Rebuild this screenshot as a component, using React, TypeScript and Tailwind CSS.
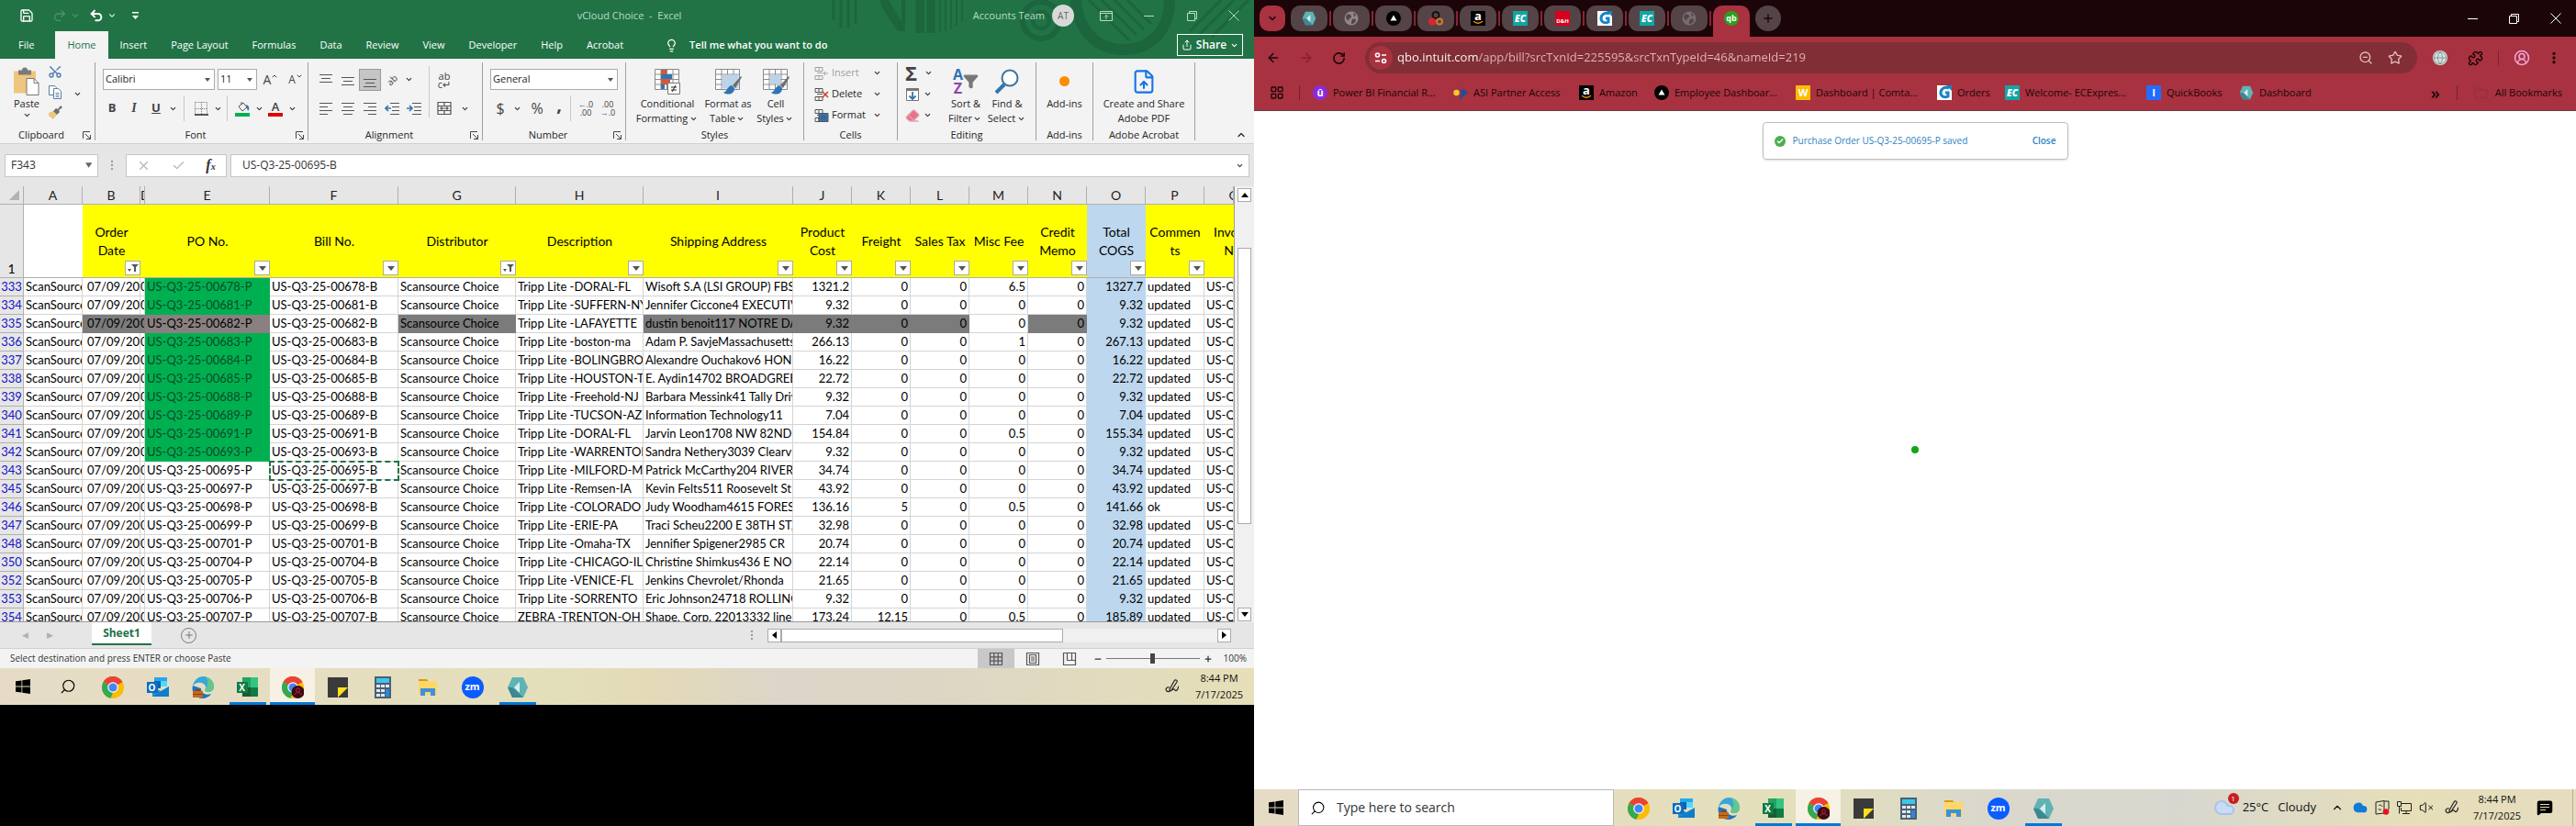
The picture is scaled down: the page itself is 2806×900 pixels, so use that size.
import React from 'react';
import {
    ArrowLeft, ArrowRight, ChevronDown, ChevronUp, Copy, Ellipsis, EllipsisVertical, FileUp, Globe, LayoutGrid, Lightbulb,
    Minus, Plus, Puzzle, Redo2, RotateCw, Save, Scissors, Search, Share, Star, Undo2, X, ZoomOut,
    CircleUserRound, Folder, VolumeX, MessageSquareText, Check, Cloud, Filter, Eraser,
} from 'lucide-react';

const menuTabs = ['File', 'Home', 'Insert', 'Page Layout', 'Formulas', 'Data', 'Review', 'View', 'Developer', 'Help', 'Acrobat'];

const columns = [
    { letter: 'A', width: 64, title: '' },
    { letter: 'B', width: 63, title: 'Order Date', filtered: true, narrow: true },
    { letter: 'D', width: 5, title: '' },
    { letter: 'E', width: 136, title: 'PO No.' },
    { letter: 'F', width: 140, title: 'Bill No.' },
    { letter: 'G', width: 128, title: 'Distributor', filtered: true },
    { letter: 'H', width: 139, title: 'Description' },
    { letter: 'I', width: 163, title: 'Shipping Address' },
    { letter: 'J', width: 64, title: 'Product Cost', narrow: true },
    { letter: 'K', width: 64, title: 'Freight' },
    { letter: 'L', width: 64, title: 'Sales Tax' },
    { letter: 'M', width: 64, title: 'Misc Fee' },
    { letter: 'N', width: 64, title: 'Credit Memo', narrow: true },
    { letter: 'O', width: 64, title: 'Total COGS', narrow: true },
    { letter: 'P', width: 64, title: 'Commen ts', narrow: true },
    { letter: 'Q', width: 33, title: 'Invoice No.' },
];

// row, po, description, address, cost, freight, misc, total, comment
const rows: [number, string, string, string, string, string, string, string, string][] = [
    [333, '00678', 'Tripp Lite -DORAL-FL', 'Wisoft S.A (LSI GROUP) FBS', '1321.2', '0', '6.5', '1327.7', 'updated'],
    [334, '00681', 'Tripp Lite -SUFFERN-NY', 'Jennifer Ciccone4 EXECUTIVE', '9.32', '0', '0', '9.32', 'updated'],
    [335, '00682', 'Tripp Lite -LAFAYETTE', 'dustin benoit117 NOTRE DAME', '9.32', '0', '0', '9.32', 'updated'],
    [336, '00683', 'Tripp Lite -boston-ma', 'Adam P. SavjeMassachusetts', '266.13', '0', '1', '267.13', 'updated'],
    [337, '00684', 'Tripp Lite -BOLINGBROOK', 'Alexandre Ouchakov6 HONEY', '16.22', '0', '0', '16.22', 'updated'],
    [338, '00685', 'Tripp Lite -HOUSTON-TX', 'E. Aydin14702 BROADGREEN', '22.72', '0', '0', '22.72', 'updated'],
    [339, '00688', 'Tripp Lite -Freehold-NJ', 'Barbara Messink41 Tally Drive', '9.32', '0', '0', '9.32', 'updated'],
    [340, '00689', 'Tripp Lite -TUCSON-AZ', 'Information Technology11', '7.04', '0', '0', '7.04', 'updated'],
    [341, '00691', 'Tripp Lite -DORAL-FL', 'Jarvin Leon1708 NW 82ND', '154.84', '0', '0.5', '155.34', 'updated'],
    [342, '00693', 'Tripp Lite -WARRENTON', 'Sandra Nethery3039 Clearview', '9.32', '0', '0', '9.32', 'updated'],
    [343, '00695', 'Tripp Lite -MILFORD-MA', 'Patrick McCarthy204 RIVER', '34.74', '0', '0', '34.74', 'updated'],
    [345, '00697', 'Tripp Lite -Remsen-IA', 'Kevin Felts511 Roosevelt St', '43.92', '0', '0', '43.92', 'updated'],
    [346, '00698', 'Tripp Lite -COLORADO', 'Judy Woodham4615 FOREST', '136.16', '5', '0.5', '141.66', 'ok'],
    [347, '00699', 'Tripp Lite -ERIE-PA', 'Traci Scheu2200 E 38TH ST,', '32.98', '0', '0', '32.98', 'updated'],
    [348, '00701', 'Tripp Lite -Omaha-TX', 'Jennifier Spigener2985 CR', '20.74', '0', '0', '20.74', 'updated'],
    [350, '00704', 'Tripp Lite -CHICAGO-IL', 'Christine Shimkus436 E NORTH', '22.14', '0', '0', '22.14', 'updated'],
    [352, '00705', 'Tripp Lite -VENICE-FL', 'Jenkins Chevrolet/Rhonda', '21.65', '0', '0', '21.65', 'updated'],
    [353, '00706', 'Tripp Lite -SORRENTO', 'Eric Johnson24718 ROLLING', '9.32', '0', '0', '9.32', 'updated'],
    [354, '00707', 'ZEBRA -TRENTON-OH', 'Shape, Corp. 22013332 line', '173.24', '12.15', '0.5', '185.89', 'updated'],
];

const Chev = ({ className = 'w-3' }: { className?: string }) => (
    <span className={`flex shrink-0 items-center justify-center ${className}`}>
        <ChevronDown className="size-[9px] text-[#333]" strokeWidth={3} />
    </span>
);

const Restore = ({ className = 'size-[11px]' }: { className?: string }) => (
    <svg viewBox="0 0 11 11" className={className} fill="none" stroke="currentColor"><path d="M.5 2.500h8v8h-8zM2.500 2.500v-2h8v8h-2" /></svg>
);

const IconButton = ({ label, className = 'w-6', children }: { label: string, className?: string, children: React.ReactNode }) => (
    <button aria-label={label} className={`flex h-6 shrink-0 items-center justify-center text-[#444] ${className}`}>{children}</button>
);

const Combo = ({ label, value, className }: { label: string, value: string, className: string }) => (
    <label className={`flex h-[23px] shrink-0 items-center border border-[#ababab] bg-white pr-1 pl-0.5 ${className}`}>
        <select aria-label={label} className="min-w-0 flex-1 appearance-none outline-none"><option>{value}</option></select>
        <svg viewBox="0 0 6 4" className="h-1 w-1.5" fill="#555"><path d="M0 0h6L3 4z" /></svg>
    </label>
);

const Sep = ({ className = '' }: { className?: string }) => <span className={`h-7 w-px shrink-0 bg-[#c8c8c8] ${className}`} />;

const Group = ({ label, width, launcher, children }: { label: string, width: string, launcher?: boolean, children: React.ReactNode }) => (
    <section aria-label={label} className={`flex shrink-0 flex-col border-r border-[#a0a0a0] ${width}`}>
        <div className="flex h-[73px] flex-col">{children}</div>
        <div className="flex h-3 items-center leading-3">
            <span className="flex-1 text-center">{label}</span>
            {launcher && (
                <button aria-label={`${label} settings`} className="mr-1">
                    <svg viewBox="0 0 9 9" className="size-[9px]" fill="none" stroke="#444"><path d="M8 .5H.5V8M3 3l5 5M8.500 4v4.500H4" /></svg>
                </button>
            )}
        </div>
    </section>
);

// big ribbon button: picture on top, two lines of text below it
const BigButton = ({ lines, width, arrow, children }: { lines: string[], width: string, arrow?: boolean, children: React.ReactNode }) => (
    <button className={`flex shrink-0 flex-col items-center leading-4 ${width}`}>
        <span className="flex h-[37px] items-center pt-1">{children}</span>
        {lines.map((line, i) => (
            <span key={line} className="flex items-center whitespace-nowrap">
                {line}{arrow && i === lines.length - 1 && <Chev />}
            </span>
        ))}
    </button>
);

const Lines = ({ d }: { d: string }) => (
    <svg viewBox="0 0 16 16" className="size-4" fill="none" stroke="#555" strokeWidth="1.200"><path d={d} /></svg>
);

const GridPic = ({ blocks, brush }: { blocks: React.ReactNode, brush?: boolean }) => (
    <svg viewBox="0 0 30 30" className="size-[30px]" fill="none">
        <path fill="#fff" stroke="#8a8a8a" d="M1.500 1.500h26v22h-26z" />
        <path stroke="#8a8a8a" d="M1.500 7h26M1.500 12.500h26M1.500 18h26M8 1.500v22M14.500 1.500v22M21 1.500v22" />
        {blocks}
        {brush && <path fill="#6d6d6d" d="M29 9l-9 10 3 3 7-12z" />}
        {brush && <path fill="#2f75b5" d="M19 19c-4 0-4 6-9 8 5 3 12 2 12-5z" />}
    </svg>
);

const ChromeIcon = ({ badge }: { badge?: boolean }) => (
    <svg viewBox="0 0 24 24" className="size-6">
        <circle cx="12" cy="12" r="12" fill="#fbbc05" />
        <path fill="#ea4335" d="M12 12L1.600 6a12 12 0 0 1 20.800 0z" />
        <path fill="#ea4335" d="M1.600 6a12 12 0 0 1 20.800 0.500H12z" />
        <path fill="#34a853" d="M1.600 6L12 12l-1 6-2.500 5.500A12 12 0 0 1 1.600 6z" />
        <path fill="#34a853" d="M7 15l5 3-2.500 5.700A12 12 0 0 1 4 21z" />
        <circle cx="12" cy="12" r="5.800" fill="#fff" /><circle cx="12" cy="12" r="4.600" fill="#4285f4" />
        {badge && <g><circle cx="17.500" cy="17" r="7" fill="#3b0a12" /><circle cx="17.500" cy="15" r="2" fill="none" stroke="#b5213d" /><path d="M13.500 20c1-3 7-3 8 0" fill="none" stroke="#b5213d" /></g>}
    </svg>
);

const OutlookIcon = () => (
    <span className="relative block size-6">
        <svg viewBox="0 0 24 24" className="size-6"><path fill="#28a8ea" d="M8 1h14v10H8z" /><path fill="#0364b8" d="M8 5h7v8H8z" /><path fill="#50d9ff" d="M15 5h7v6h-7z" /><path fill="#1490df" d="M6 11l9 5 9-5v11H6z" /><path fill="#0a5ca8" d="M6 22l18-11v11z" opacity=".35" /><path fill="#0f6cbd" d="M0 6h12v12H0z" /></svg>
        <b className="absolute top-1.5 left-0 w-3 text-center text-[10px] leading-3 text-white">O</b>
    </span>
);

const EdgeIcon = () => (
    <svg viewBox="0 0 24 24" className="size-6">
        <path fill="#1b74c9" d="M1 10a11 11 0 0 0 15 13c2-1 4-2 5-4-5 2-11 0-11-6z" />
        <path fill="#35a7d8" d="M1 11C2 4 7 0 12.500 0 19 0 24 5 24 11c0 4-3 6-6 6-3 0-5-1-3-4 1-3-3-7-8-6-3 0-5 2-6 4z" />
        <path fill="#6fd07a" d="M15 .5c6 1 9 6 9 10.500 0 4-3 6-6 6-3 0-5-1-3-4 3-3 3-8 0-12.500z" opacity=".8" />
        <path fill="#c46a1a" d="M1 16h11v7H1z" /><path fill="#8a4612" d="M1 19h11v1H1zM4 14h5v2H4z" />
    </svg>
);

const ExcelIcon = () => (
    <span className="relative block size-6">
        <svg viewBox="0 0 24 24" className="size-6"><path fill="#21a366" d="M6 1h9v11H6z" /><path fill="#33c481" d="M15 1h8v11h-8z" /><path fill="#107c41" d="M6 12h17v10H6z" /><path fill="#185c37" d="M6 12h9v10H6z" /><path fill="#107c41" d="M0 6h12v12H0z" /></svg>
        <b className="absolute top-1.5 left-0 w-3 text-center text-[10px] leading-3 text-white">X</b>
    </span>
);

const NoteIcon = () => (
    <svg viewBox="0 0 24 24" className="size-6"><path fill="#3a3a3a" d="M1 1h22v22H1z" /><path fill="#ffe11a" d="M12 23V12h11z" /></svg>
);

const CalcIcon = () => (
    <svg viewBox="0 0 24 24" className="size-6">
        <path fill="#4b5f73" d="M3 0h18v24H3z" /><path fill="#3ec6e8" d="M5 2h14v5H5z" />
        <path fill="#dfe7ee" d="M5 9h4v3H5zM10 9h4v3h-4zM15 9h4v3h-4zM5 14h4v3H5zM10 14h4v3h-4zM5 19h4v3H5zM10 19h4v3h-4z" /><path fill="#2b88d8" d="M15 14h4v8h-4z" />
    </svg>
);

const ExplorerIcon = () => (
    <svg viewBox="0 0 24 24" className="size-6"><path fill="#d99b1c" d="M2 3h9l2 3H2z" /><path fill="#ffd767" d="M2 5h20v15H2z" /><path fill="#3e8fdc" d="M4 21v-8h16v8h-5v-4H9v4z" /></svg>
);

const ZoomIcon = () => (
    <span className="flex size-6 items-center justify-center rounded-full bg-[#0b5cff] text-[11px] font-bold text-white">zm</span>
);

const HexIcon = ({ className = 'size-6' }: { className?: string }) => (
    <svg viewBox="0 0 24 24" className={className}><path fill="#5fb3b3" d="M6 1h12l5 11-5 11H6L1 12z" /><path fill="#3c8793" d="M1 12l5 11h12l-6-6-6-5z" /><path fill="#d9eef0" d="M14 6v12l-6-6z" /></svg>
);

const WindowsLogo = () => (
    <svg viewBox="0 0 16 16" className="size-4" fill="#000"><path d="M0 2.300l6.500-.9v6.200H0zM7.300 1.300L16 0v7.600H7.300zM0 8.400h6.500v6.200L0 13.700zM7.300 8.400H16V16l-8.700-1.200z" /></svg>
);

const PenSwirl = () => (
    <svg viewBox="0 0 16 16" className="size-4" fill="none" stroke="#222" strokeWidth="1.200"><path d="M5 11l5-9c1-2 4-1 3 1l-6 9-2 1zM5 9c-3-1-5 2-3 4s5-1 7-2 2 3 4 1 1-4 2-4" /></svg>
);

const apps = [
    { name: 'Chrome', icon: <ChromeIcon /> },
    { name: 'Outlook', icon: <OutlookIcon /> },
    { name: 'Edge', icon: <EdgeIcon /> },
    { name: 'Excel', icon: <ExcelIcon />, state: 'open' },
    { name: 'Chrome profile', icon: <ChromeIcon badge />, state: 'active' },
    { name: 'Sticky Notes', icon: <NoteIcon /> },
    { name: 'Calculator', icon: <CalcIcon /> },
    { name: 'File Explorer', icon: <ExplorerIcon /> },
    { name: 'Zoom', icon: <ZoomIcon /> },
    { name: 'Dashboard', icon: <HexIcon />, state: 'open' },
];

const AppButtons = () => (
    <>
        {apps.map(app => (
            <button
                key={app.name}
                aria-label={app.name}
                className={`flex h-10 w-[49px] flex-col items-center justify-between ${app.state === 'active' ? 'bg-[#f6f1e4]' : ''}`}
            >
                <span className="flex h-[37px] items-center pt-1">{app.icon}</span>
                {app.state && <span className={`h-[3px] bg-[#0078d7] ${app.state === 'active' ? 'w-full' : 'w-10'}`} />}
            </button>
        ))}
    </>
);

const Clock = ({ className = '' }: { className?: string }) => (
    <div className={`text-center text-[11px] leading-[18px] text-[#111] ${className}`}>
        <div>8:44 PM</div>
        <div>7/17/2025</div>
    </div>
);

const TitleBar = () => (
    <div className="flex h-[34px] items-center text-[#b9dcc6]">
        <div className="flex flex-1 items-center pl-[21px]">
            <Save className="size-4 text-white" />
            <Redo2 className="ml-5 size-4 text-[#4f9069]" />
            <ChevronDown className="ml-1 size-[10px] text-[#4f9069]" strokeWidth={3} />
            <Undo2 className="ml-2.5 size-4 text-white" strokeWidth={3} />
            <ChevronDown className="ml-1 size-[10px]" strokeWidth={3} />
            <svg viewBox="0 0 9 9" className="ml-4 size-[9px]" fill="#fff"><path d="M1 0h7v1.500H1zM1 4h7L4.500 8z" /></svg>
        </div>
        <div>vCloud Choice&nbsp; -&nbsp; Excel</div>
        <div className="flex flex-1 items-center justify-end pr-4">
            <span>Accounts Team</span>
            <span className="ml-2 flex size-6 items-center justify-center rounded-full bg-[#d9d9d9] text-[10px] text-[#666]">AT</span>
            <button aria-label="Ribbon display options" className="ml-7">
                <svg viewBox="0 0 14 11" className="h-[11px] w-[14px]" fill="none" stroke="currentColor"><path d="M.5.5h13v10H.5zM.5 2.500h13M7 9V4.500M5 6.500l2-2 2 2" /></svg>
            </button>
            <button aria-label="Minimize" className="ml-[34px]"><svg viewBox="0 0 11 11" className="size-[11px]" stroke="currentColor"><path d="M0 5.500h11" /></svg></button>
            <button aria-label="Restore" className="ml-9"><Restore /></button>
            <button aria-label="Close Excel" className="ml-[34px]"><svg viewBox="0 0 12 12" className="size-3" stroke="currentColor"><path d="M.5.5l11 11M11.500.5l-11 11" /></svg></button>
        </div>
    </div>
);

const MenuBar = () => (
    <nav className="flex h-[30px] items-center text-white">
        {menuTabs.map(tab => (
            <button
                key={tab}
                className={`h-[30px] px-[13px] ${tab === 'Home' ? 'bg-[#f3f3f3] text-[#217346]' : ''} ${tab === 'File' ? 'pr-[23px] pl-5' : ''}`}
            >
                {tab}
            </button>
        ))}
        <button className="ml-8 flex items-center gap-3 font-semibold"><Lightbulb className="size-[15px]" />Tell me what you want to do</button>
        <button className="mr-3 ml-auto flex h-6 w-[72px] items-center justify-center gap-1 border border-white text-xs font-semibold">
            <Share className="size-3" />Share<ChevronDown className="size-[9px]" strokeWidth={3} />
        </button>
    </nav>
);

const Ribbon = () => (
    <div className="flex h-[93px] border-b border-[#cfcfcf] bg-[#f3f3f3] pt-1 pb-[3px] text-[#262626]">
        <Group label="Clipboard" width="w-[104px]" launcher>
            <div className="flex pl-[10px]">
                <button className="flex w-[38px] flex-col items-center leading-4">
                    <svg viewBox="0 0 30 32" className="mt-1 h-[33px] w-[30px]">
                        <path fill="#eec67e" d="M1 5h24v24H1z" /><path fill="#7a7a7a" d="M6 4h4a3 3 0 0 1 6 0h4v5H6z" />
                        <path fill="#fff" stroke="#777" d="M15 13h8l5 5v13H15z" /><path fill="none" stroke="#777" d="M23 13v5h5" />
                    </svg>
                    Paste
                    <Chev />
                </button>
                <div className="flex w-6 flex-col items-center justify-between pt-0.5">
                    <button aria-label="Cut" className="text-[#4a78ad]"><Scissors className="size-4 -rotate-90" /></button>
                    <button aria-label="Copy">
                        <svg viewBox="0 0 16 16" className="size-4" fill="#fff" stroke="#5a7fa5"><path d="M1.500 1.500h6l2 2v8h-8z" /><path d="M6.500 4.500h5l3 3v8h-8zM8.500 9.500h4M8.500 11.500h4M8.500 13.500h4" /></svg>
                    </button>
                    <button aria-label="Format Painter">
                        <svg viewBox="0 0 16 16" className="size-4"><path fill="#eec67e" d="M1 9l5-2 4 4-4 5-5-4z" /><path fill="#6d6d6d" d="M6 7l3-3 2 1 3-4 2 2-4 3 1 2-3 3z" /></svg>
                    </button>
                </div>
                <Chev className="mt-7 h-3 w-6" />
            </div>
        </Group>

        <Group label="Font" width="w-[232px]" launcher>
            <div className="flex h-[37px] items-center gap-[3px] pl-2">
                <Combo label="Font name" value="Calibri" className="w-[122px]" />
                <Combo label="Font size" value="11" className="w-[43px]" />
                <IconButton label="Increase font size"><span className="text-sm">A</span><ChevronUp className="mb-2 size-2" strokeWidth={3} /></IconButton>
                <IconButton label="Decrease font size"><span className="text-xs">A</span><ChevronDown className="mb-2 size-2" strokeWidth={3} /></IconButton>
            </div>
            <div className="flex h-[26px] items-center pl-1.5">
                <IconButton label="Bold"><b className="text-[13px]">B</b></IconButton>
                <IconButton label="Italic"><b className="font-[Liberation_Serif] text-sm italic">I</b></IconButton>
                <IconButton label="Underline"><b className="text-[13px] underline">U</b></IconButton>
                <Chev />
                <Sep className="mx-1.5" />
                <IconButton label="Borders">
                    <svg viewBox="0 0 15 15" className="size-[15px]" fill="none" stroke="#777" strokeDasharray="1 1"><path d="M.5.5h13v13M.5.5v13M7.500 0v13M0 7.500h14" /><path d="M0 14h15" stroke="#222" strokeWidth="1.500" strokeDasharray="none" /></svg>
                </IconButton>
                <Chev />
                <Sep className="mx-1" />
                <IconButton label="Fill color">
                    <svg viewBox="0 0 16 17" className="h-[17px] w-4" fill="none"><path stroke="#555" d="M4 6l5-4 4 5-5 4zM7 4V1" /><path fill="#2f75b5" d="M12 4c4 1 4 5 2 7z" /><path fill="#00b050" d="M0 13h16v4H0z" /></svg>
                </IconButton>
                <Chev />
                <IconButton label="Font color">
                    <span className="flex w-4 flex-col items-center"><b className="text-[13px] leading-3 font-semibold">A</b><span className="mt-px h-1 w-4 bg-[#e00000]" /></span>
                </IconButton>
                <Chev />
            </div>
        </Group>

        <Group label="Alignment" width="w-[190px]" launcher>
            <div className="flex pl-[7px]">
                <div className="w-[124px]">
                    <div className="flex h-[37px] items-center">
                        <IconButton label="Top align"><Lines d="M1 2.500h14M3 6.500h10M1 10.500h14" /></IconButton>
                        <IconButton label="Middle align"><Lines d="M1 5.500h14M3 9.500h10M1 13.500h14" /></IconButton>
                        <IconButton label="Bottom align" className="w-6 border border-[#999] bg-[#c5c5c5]"><Lines d="M1 7.500h14M3 11.500h10M1 15.500h14" /></IconButton>
                        <IconButton label="Orientation"><span className="-rotate-45 text-[10px] leading-3">ab</span></IconButton>
                        <Chev />
                    </div>
                    <div className="flex h-[26px] items-center">
                        <IconButton label="Align left"><Lines d="M1 2.500h14M1 6.500h9M1 10.500h14M1 14.500h9" /></IconButton>
                        <IconButton label="Center"><Lines d="M1 2.500h14M3 6.500h10M1 10.500h14M3 14.500h10" /></IconButton>
                        <IconButton label="Align right"><Lines d="M1 2.500h14M6 6.500h9M1 10.500h14M6 14.500h9" /></IconButton>
                        <IconButton label="Decrease indent">
                            <svg viewBox="0 0 16 16" className="size-4" fill="none" stroke="#555"><path d="M6 2.500h10M8 6.500h8M8 10.500h8M6 14.500h10" /><path stroke="#2f75b5" strokeWidth="1.600" d="M7 8H1M4 5L1 8l3 3" /></svg>
                        </IconButton>
                        <IconButton label="Increase indent">
                            <svg viewBox="0 0 16 16" className="size-4" fill="none" stroke="#555"><path d="M6 2.500h10M8 6.500h8M8 10.500h8M6 14.500h10" /><path stroke="#2f75b5" strokeWidth="1.600" d="M0 8h6M3 5l3 3-3 3" /></svg>
                        </IconButton>
                    </div>
                </div>
                <span className="mt-1 mr-1 h-14 w-px bg-[#c8c8c8]" />
                <div>
                    <div className="flex h-[37px] items-center">
                        <IconButton label="Wrap text"><span className="text-[11px] leading-[9px]">ab<br />c↵</span></IconButton>
                    </div>
                    <div className="flex h-[26px] items-center">
                        <IconButton label="Merge and center"><Lines d="M1 1.500h14v13H1zM1 5.500h14M1 10.500h14M8 1.500v4M8 10.500v4M4 8h8M5.500 6.500L4 8l1.500 1.500M10.500 6.500L12 8l-1.500 1.500" /></IconButton>
                        <Chev className="w-5" />
                    </div>
                </div>
            </div>
        </Group>

        <Group label="Number" width="w-[156px]" launcher>
            <div className="flex h-[37px] items-center px-2">
                <Combo label="Number format" value="General" className="w-full" />
            </div>
            <div className="flex h-[26px] items-center pl-[7px]">
                <IconButton label="Accounting format"><span className="text-base">$</span></IconButton>
                <Chev className="w-3" />
                <IconButton label="Percent" className="w-8"><span className="text-base">%</span></IconButton>
                <IconButton label="Comma" className="w-4"><b className="pb-2 text-xl">,</b></IconButton>
                <Sep className="mx-1" />
                <IconButton label="Increase decimal"><span className="text-[9px] leading-[9px]"><span className="text-[#2f75b5]">←</span>.0<br />.00</span></IconButton>
                <IconButton label="Decrease decimal"><span className="text-[9px] leading-[9px]">.00<br /><span className="text-[#2f75b5]">→</span>.0</span></IconButton>
            </div>
        </Group>

        <Group label="Styles" width="w-[194px]">
            <div className="flex pl-2">
                <BigButton lines={['Conditional', 'Formatting']} width="w-[74px]" arrow>
                    <GridPic blocks={<><path fill="#d05a3c" d="M8 2h6v5H8zM8 12h10v6H8z" /><path fill="#2f75b5" d="M8 7h12v5H8zM8 18h4v5H8z" /><path fill="#fff" stroke="#777" d="M15.500 16.500h13v12h-13z" /><path stroke="#222" d="M19 21h6M19 24h6M24 19l-4 7" /></>} />
                </BigButton>
                <BigButton lines={['Format as', 'Table']} width="w-[58px]" arrow>
                    <GridPic brush blocks={<path fill="#bdd3ea" d="M8.500 7.500h18v15h-18z" />} />
                </BigButton>
                <BigButton lines={['Cell', 'Styles']} width="w-[46px]" arrow>
                    <GridPic brush blocks={<path fill="#bdd3ea" d="M8.500 7.500h12v10h-12z" />} />
                </BigButton>
            </div>
        </Group>

        <Group label="Cells" width="w-[102px]">
            <div className="flex flex-col pl-[11px]">
                {['Insert', 'Delete', 'Format'].map(name => (
                    <button key={name} className={`flex h-[23px] items-center gap-[3px] ${name === 'Insert' ? 'text-[#a0a0a0]' : ''}`}>
                        <svg viewBox="0 0 16 16" className="size-4" fill="none" stroke={name === 'Insert' ? '#a0a0a0' : '#555'}>
                            <path d="M1 1.500h8v4H1zM1 10.500h8v4H1zM5 1.500v4M5 10.500v4M3 7.500h6" />
                            {name === 'Delete' && <path stroke="#d03a2c" strokeWidth="1.500" d="M9 5l6 6M15 5l-6 6" />}
                            {name === 'Format' && <path fill="#2f75b5" stroke="#555" d="M5 5.500h10v9H5zM8 8.500h4v3H8z" />}
                            {name === 'Insert' && <path d="M15 8h-5M12 6l-2 2 2 2" />}
                        </svg>
                        <span className="w-10 text-left">{name}</span><Chev />
                    </button>
                ))}
            </div>
        </Group>

        <Group label="Editing" width="w-[151px]">
            <div className="flex pl-2">
                <div className="w-[42px]">
                    <button aria-label="AutoSum" className="flex h-[23px] items-center text-[22px] font-bold text-[#444]">Σ<Chev className="ml-2" /></button>
                    <button aria-label="Fill" className="flex h-[23px] items-center">
                        <svg viewBox="0 0 16 16" className="size-4" fill="none"><path fill="#fff" stroke="#777" d="M1.500 1.500h13v13h-13z" /><path fill="#777" d="M1 1h14v3H1z" /><path stroke="#2f75b5" strokeWidth="1.800" d="M8 5v8M4.500 9.500L8 13l3.500-3.500" /></svg>
                        <Chev className="ml-1" />
                    </button>
                    <button aria-label="Clear" className="flex h-[23px] items-center"><Eraser className="size-4 fill-[#e8728a] text-[#e8a0ae]" /><Chev className="ml-1" /></button>
                </div>
                <BigButton lines={['Sort &', 'Filter']} width="w-[48px]" arrow>
                    <span className="text-base leading-[15px] font-bold"><span className="block text-[#2f75b5]">A</span><span className="block text-[#8e44ad]">Z</span></span>
                    <Filter className="size-[17px] fill-[#777] text-[#777]" />
                </BigButton>
                <BigButton lines={['Find &', 'Select']} width="w-[42px]" arrow>
                    <svg viewBox="0 0 28 28" className="size-7" fill="none"><path stroke="#2f75b5" strokeWidth="4" d="M2 26l9-9" /><circle cx="17" cy="10" r="8.500" fill="#fff" stroke="#41719c" strokeWidth="2" /></svg>
                </BigButton>
            </div>
        </Group>

        <Group label="Add-ins" width="w-[62px]">
            <div className="flex justify-center">
                <BigButton lines={['Add-ins']} width="w-14"><span className="size-[11px] rounded-full bg-[#ff8c00]" /></BigButton>
            </div>
        </Group>

        <Group label="Adobe Acrobat" width="w-[111px]">
            <div className="flex justify-center">
                <BigButton lines={['Create and Share', 'Adobe PDF']} width="w-[104px]"><FileUp className="size-7 text-[#1473e6]" strokeWidth={1.8} /></BigButton>
            </div>
        </Group>
        <button aria-label="Collapse ribbon" className="mr-2 ml-auto self-end"><ChevronUp className="size-3" strokeWidth={2.5} /></button>
    </div>
);

const FormulaBar = () => (
    <div className="flex h-[46px] items-center bg-[#e6e6e6] px-[5px] text-xs text-[#333]">
        <label className="flex h-[25px] w-[102px] items-center border border-[#c6c6c6] bg-white px-1.5">
            <input aria-label="Name box" defaultValue="F343" className="w-full min-w-0 outline-none" />
            <svg viewBox="0 0 8 6" className="h-1.5 w-2" fill="#666"><path d="M0 0h8L4 6z" /></svg>
        </label>
        <Ellipsis className="mx-2 size-[14px] rotate-90 text-[#999]" />
        <div className="flex h-[25px] w-[110px] items-center justify-around border border-[#c6c6c6] bg-white">
            <button aria-label="Cancel"><X className="size-[15px] text-[#b5b5b5]" /></button>
            <button aria-label="Enter"><Check className="size-[15px] text-[#b5b5b5]" /></button>
            <button aria-label="Insert function" className="font-[Liberation_Serif] text-base font-semibold italic">f<span className="text-[10px]">x</span></button>
        </div>
        <label className="ml-1 flex h-[25px] flex-1 items-center border border-[#c6c6c6] bg-white pr-1 pl-3">
            <input aria-label="Formula" defaultValue="US-Q3-25-00695-B" className="flex-1 outline-none" />
            <Chev />
        </label>
    </div>
);

const cellClass = (row: number, col: string) => {
    let c = 'JKLMNO'.includes(col) ? 'text-right pr-0.5 pl-0' : 'pl-0.5 pr-0';
    if (col === 'B') c = 'pl-[5px] pr-0';
    if (col === 'D') c = 'px-0';
    if (col === 'O') return c + ' bg-[#bdd7ee] border-r border-b border-[#bdd7ee]';
    if (col === 'E' && row < 343) c += row === 335 ? ' bg-[#8a8080] border-r border-b border-[#8a8080]' : ' bg-[#00b050] text-[#0d4a28] border-r border-b border-[#00b050]';
    else if (row === 335 && 'BDGIJKLN'.includes(col)) c += ' bg-[#7b7b7b] border-r border-b border-[#7b7b7b]';
    else c += ' bg-white border-r border-b border-[#d4d4d4]';
    if (row === 343 && col === 'F') c += ' outline-2 -outline-offset-1 outline-dashed outline-[#217346]';
    return c;
};

const Sheet = () => (
    <div className="flex h-[475px] bg-[#e6e6e6]">
        <div className="min-w-0 flex-1 overflow-hidden border-r border-b border-[#9b9b9b]">
            <table className="w-full table-fixed border-separate border-spacing-0 font-[Lato,Carlito,sans-serif] text-[13px] text-black">
                <colgroup>
                    <col className="w-[26px]" />
                    {columns.map(c => <col key={c.letter} style={c.letter === 'Q' ? undefined : { width: c.width }} />)}
                </colgroup>
                <thead>
                    <tr className="h-5 bg-[#e6e6e6] text-sm text-[#222]">
                        <th className="border-r border-b border-[#b0b0b0] p-0">
                            <svg viewBox="0 0 11 11" className="mr-1 ml-auto size-[11px]" fill="#b2b2b2"><path d="M11 0v11H0z" /></svg>
                        </th>
                        {columns.map(c => (
                            <th key={c.letter} className="overflow-hidden border-r border-b border-[#b0b0b0] p-0 leading-[19px] font-normal">
                                {c.letter === 'Q' ? <div className="w-16">Q</div> : c.letter}
                            </th>
                        ))}
                    </tr>
                    <tr className="h-20 text-sm">
                        <th className="border-r border-b border-[#b0b0b0] bg-[#e6e6e6] p-0 align-bottom leading-[18px] font-normal">1</th>
                        {columns.map(c => (
                            <th
                                key={c.letter}
                                className={`relative overflow-hidden border-b border-[#b0b0b0] p-0 leading-5 font-normal ${c.letter === 'A' ? 'bg-white' : c.letter === 'O' ? 'bg-[#bdd7ee]' : 'bg-[#ffff00]'}`}
                            >
                                <div className={c.letter === 'Q' ? 'w-16 px-1' : c.narrow ? 'px-1' : ''}>{c.title}</div>
                                {c.title && c.letter !== 'Q' && (
                                    <button aria-label={`Filter ${c.title}`} className="absolute right-0 bottom-0.5 flex h-4 w-[17px] items-center justify-center border border-[#ababab] bg-white">
                                        <svg viewBox="0 0 12 8" className="h-2 w-3" fill="#555"><path d={c.filtered ? 'M0 5h4L2 8zM4 0h8L9 3v5H7V3z' : 'M2 2h8L6 7z'} /></svg>
                                    </button>
                                )}
                            </th>
                        ))}
                    </tr>
                </thead>
                <tbody>
                    {rows.map(([n, po, desc, address, cost, freight, misc, total, comment]) => {
                        const values: Record<string, string> = {
                            A: 'ScanSource', B: '07/09/2025', D: '0', E: `US-Q3-25-${po}-P`, F: `US-Q3-25-${po}-B`, G: 'Scansource Choice', H: desc, I: address,
                            J: cost, K: freight, L: '0', M: misc, N: '0', O: total, P: comment, Q: 'US-Q3',
                        };
                        return (
                            <tr key={n} className="h-5">
                                <th className="border-r border-b border-[#b0b0b0] bg-[#e6e6e6] p-0 leading-[19px] font-normal text-[#1414c8]">{n}</th>
                                {columns.map(c => (
                                    <td key={c.letter} className={`overflow-hidden py-0 leading-[19px] whitespace-nowrap ${cellClass(n, c.letter)}`}>{values[c.letter]}</td>
                                ))}
                            </tr>
                        );
                    })}
                </tbody>
            </table>
        </div>
        <div className="flex w-[21px] flex-col items-center bg-[#f0f0f0] pb-px">
            <button aria-label="Scroll up" className="mt-0.5 flex h-[15px] w-[15px] items-center justify-center border border-[#ababab] bg-white"><svg viewBox="0 0 8 5" className="h-[5px] w-2"><path d="M0 5h8L4 0z" /></svg></button>
            <div className="mt-[50px] h-[301px] w-[15px] border border-[#ababab] bg-white" />
            <button aria-label="Scroll down" className="mt-auto flex h-[15px] w-[15px] items-center justify-center border border-[#ababab] bg-white"><svg viewBox="0 0 8 5" className="h-[5px] w-2"><path d="M0 0h8L4 5z" /></svg></button>
        </div>
    </div>
);

const SheetTabs = () => (
    <div className="flex h-7 items-center bg-[#e6e6e6]">
        <div className="flex w-[100px] items-center gap-5 pl-6 text-[9px] text-[#b0b0b0]"><span>◀</span><span>▶</span></div>
        <button className="mb-auto h-[25px] w-[65px] border-b-2 border-[#217346] bg-white text-xs font-bold text-[#217346]">Sheet1</button>
        <button aria-label="New sheet" className="ml-8 flex size-[17px] items-center justify-center rounded-full border border-[#777] text-[#777]"><Plus className="size-3" /></button>
        <Ellipsis className="mr-[10px] ml-auto size-[14px] rotate-90 text-[#999]" />
        <div className="mr-[25px] flex h-[15px] w-[505px] bg-[#f0f0f0]">
            <button aria-label="Scroll left" className="flex w-[15px] items-center justify-center border border-[#ababab] bg-white"><svg viewBox="0 0 5 8" className="h-2 w-[5px]"><path d="M5 0v8L0 4z" /></svg></button>
            <div className="w-[307px] border border-[#ababab] bg-white" />
            <button aria-label="Scroll right" className="ml-auto flex w-[15px] items-center justify-center border border-[#ababab] bg-white"><svg viewBox="0 0 5 8" className="h-2 w-[5px]"><path d="M0 0v8l5-4z" /></svg></button>
        </div>
    </div>
);

const StatusBar = () => (
    <div className="flex h-[22px] items-center border-t border-[#cfcfcf] bg-[#f3f3f3] pr-2 pl-[11px] text-[10px] text-[#333]">
        <span className="flex-1">Select destination and press ENTER or choose Paste</span>
        <button aria-label="Normal view" className="flex h-full w-10 items-center justify-center bg-[#c8c8c8]"><Lines d="M1.500 1.500h13v13h-13zM1.500 5.800h13M1.500 10.200h13M5.800 1.500v13M10.200 1.500v13" /></button>
        <button aria-label="Page layout view" className="flex w-10 justify-center"><Lines d="M1.500 1.500h13v13h-13zM4.500 3.500h7v9h-7zM6 6h4M6 8h4M6 10h4" /></button>
        <button aria-label="Page break view" className="flex w-10 justify-center"><Lines d="M1.500 1.500h13v13h-13zM5.500 1.500v8h5v-8M10.500 9.500h4" /></button>
        <button aria-label="Zoom out" className="ml-1 p-0.5"><Minus className="size-[10px]" strokeWidth={3} /></button>
        <input
            type="range"
            aria-label="Zoom"
            className="mx-0.5 h-[11px] w-[102px] appearance-none bg-[linear-gradient(#777,#777)] bg-[length:100%_1px] bg-center bg-no-repeat [&::-webkit-slider-thumb]:h-[11px] [&::-webkit-slider-thumb]:w-[5px] [&::-webkit-slider-thumb]:appearance-none [&::-webkit-slider-thumb]:bg-[#444]"
        />
        <button aria-label="Zoom in" className="p-0.5"><Plus className="size-[10px]" strokeWidth={3} /></button>
        <span className="ml-2.5">100%</span>
    </div>
);

const ExcelDesktop = () => (
    <div className="min-w-0 text-[11px]">
        <header className="relative bg-[#217346]">
            <svg viewBox="0 0 470 64" className="absolute top-0 right-0 h-16 w-[470px]" fill="none" stroke="#1c653d">
                <path strokeWidth="3" d="M12 0v22M20 0v30M28 0v30M36 0v26" />
                <path fill="#1c653d" stroke="none" d="M62 0h10l14 24V0h4v34h-8L66 10z" />
                <path strokeWidth="9" d="M106 0v36M118 0v36" />
                <path strokeWidth="2" d="M128 0v34M134 0v34M140 0v32M146 0v28M152 0v24" />
                <circle cx="238" cy="22" r="20" strokeWidth="6" /><circle cx="238" cy="22" r="9" strokeWidth="4" />
                <path strokeWidth="12" d="M276 0c2 34 24 54 52 54s50-20 50-54" />
                <path strokeWidth="3" d="M290 0l44 44M304 0l38 38M318 0l32 32M332 0l26 26M400 34l34-34M410 38l38-38M424 40l40-40" />
            </svg>
            <div className="relative"><TitleBar /><MenuBar /></div>
        </header>
        <Ribbon />
        <FormulaBar />
        <Sheet />
        <SheetTabs />
        <StatusBar />
        <footer className="flex h-10 items-center bg-[linear-gradient(90deg,#e6dcc6,#e4dfbb_45%,#e3dab8_52%,#ddd5c8_62%,#ddd6c4_75%,#e6dfb8)] pr-[9px]">
            <button aria-label="Start" className="flex w-[49px] justify-center"><WindowsLogo /></button>
            <button aria-label="Search" className="flex w-[49px] justify-center"><Search className="size-[18px] -scale-x-100 text-black" strokeWidth={1.5} /></button>
            <AppButtons />
            <span className="mr-[14px] ml-auto"><PenSwirl /></span>
            <Clock className="w-[58px]" />
        </footer>
    </div>
);

const Ec = () => <span className="flex size-4 items-center justify-center bg-[#12a5a5] text-[10px] font-extrabold text-white italic">EC</span>;
const Amazon = () => (
    <span className="flex size-4 flex-col items-center bg-black text-[13px] leading-[11px] font-bold text-white">
        a<svg viewBox="0 0 12 4" className="h-1 w-3 shrink-0" fill="none" stroke="#ff9900" strokeWidth="1.300"><path d="M1 0c3 3 7 3 10 0" /></svg>
    </span>
);
const Triangle = () => (
    <svg viewBox="0 0 16 16" className="size-4"><circle cx="8" cy="8" r="8" /><path fill="#fff" d="M8 4.500l3.500 6h-7z" /></svg>
);
const Gmark = () => (
    <svg viewBox="0 0 16 16" className="size-4"><path fill="#fff" d="M0 0h16v16H0z" /><path fill="none" stroke="#1583c6" strokeWidth="3" d="M13 3C8 1 4 4 4 8s4 6 8 4V8H9" /><path fill="#1583c6" d="M10 0h6v6z" /></svg>
);
const WorldIcon = ({ color }: { color: string }) => (
    <svg viewBox="0 0 16 16" className="size-4"><circle cx="8" cy="8" r="7.500" fill={color} /><path fill="#544448" d="M3 4c3-1 5 0 5 2S5 8 5 10 3 9 2 7zM9 9c2-1 4 0 4 1s-2 4-4 4-1-2 0-5zM10 2c1 0 3 2 3 3l-2 1z" /></svg>
);

const browserTabs = [
    { name: 'Dashboard', icon: <HexIcon className="size-4" /> },
    { name: 'Page one', icon: <WorldIcon color="#918689" /> },
    { name: 'Employee Dashboard', icon: <Triangle /> },
    { name: 'Network', icon: <svg viewBox="0 0 16 16" className="size-4" fill="none" strokeWidth="2"><circle cx="8" cy="4.500" r="3.500" stroke="#111" /><circle cx="4" cy="11.500" r="3" fill="#d8262c" stroke="#d8262c" /><circle cx="12" cy="11.500" r="3" stroke="#d87a2c" /></svg> },
    { name: 'Amazon', icon: <Amazon /> },
    { name: 'ECExpress', icon: <Ec /> },
    { name: 'D&H', icon: <span className="flex size-4 items-end justify-center bg-[#d8001c] text-[6px] font-bold text-white">D&amp;H</span> },
    { name: 'Orders', icon: <Gmark /> },
    { name: 'ECExpress orders', icon: <Ec /> },
    { name: 'Page two', icon: <WorldIcon color="#776d70" /> },
];

const bookmarks = [
    { name: 'Power BI Financial R...', icon: <span className="flex size-4 items-center justify-center rounded-full bg-[#8a2be2] text-[11px] font-bold text-white">û</span>, width: 'w-[153px]' },
    { name: 'ASI Partner Access', icon: <svg viewBox="0 0 16 16" className="size-4"><path fill="#1d4e9e" d="M6 0l10 8-10 8 3-8z" /><path fill="#d8262c" d="M6 0l5 4-2 1z" /><circle cx="3.500" cy="8" r="3.200" fill="#ffc72c" /></svg>, width: 'w-[137px]' },
    { name: 'Amazon', icon: <Amazon />, width: 'w-[82px]' },
    { name: 'Employee Dashboar...', icon: <Triangle />, width: 'w-[154px]' },
    { name: 'Dashboard | Comta...', icon: <span className="flex size-4 items-center justify-center bg-[#fbbc05] text-[11px] font-bold text-white">W</span>, width: 'w-[154px]' },
    { name: 'Orders', icon: <Gmark />, width: 'w-[74px]' },
    { name: 'Welcome- ECExpres...', icon: <Ec />, width: 'w-[154px]' },
    { name: 'QuickBooks', icon: <span className="flex size-4 items-center justify-center bg-[#236cff] text-[11px] font-bold text-white">I</span>, width: 'w-[101px]' },
    { name: 'Dashboard', icon: <HexIcon className="size-4" />, width: 'w-[84px]' },
];

const BrowserDesktop = () => (
    <div className="flex min-h-screen min-w-0 flex-col bg-white text-[11px]">
        <div className="flex h-10 items-start bg-[#1c0508] pl-1.5">
            <button aria-label="Search tabs" className="mt-1.5 flex h-7 w-7 items-center justify-center rounded-[10px] bg-[#a83240]"><ChevronDown className="size-3 text-[#1c0508]" strokeWidth={3} /></button>
            <div className="flex pl-1.5">
                {browserTabs.map(t => (
                    <div key={t.name} className="flex w-[46px] items-center pt-1.5">
                        <button aria-label={t.name} className="flex h-7 w-10 items-center justify-center rounded-[10px] bg-[#544448]">{t.icon}</button>
                        <span className="ml-0.5 h-4 w-0.5 bg-[#8a2434]" />
                    </div>
                ))}
            </div>
            <button aria-label="QuickBooks" className="mt-1.5 flex h-[34px] w-10 items-start justify-center rounded-t-[10px] bg-[#a83240] pt-1.5">
                <span className="flex size-4 items-center justify-center rounded-full bg-[#2ca01c] text-[9px] font-bold text-white">qb</span>
            </button>
            <button aria-label="New tab" className="mt-1.5 ml-1.5 flex size-7 items-center justify-center rounded-full bg-[#544448]"><Plus className="size-[14px] text-[#1c0508]" strokeWidth={2.5} /></button>
            <div className="ml-auto flex h-10 items-center gap-[34px] pr-4 text-white">
                <button aria-label="Minimize"><svg viewBox="0 0 11 11" className="size-[11px]" stroke="currentColor"><path d="M0 5.500h11" /></svg></button>
                <button aria-label="Restore"><Restore /></button>
                <button aria-label="Close browser"><svg viewBox="0 0 12 12" className="size-3" stroke="currentColor"><path d="M.5.5l11 11M11.500.5l-11 11" /></svg></button>
            </div>
        </div>
        <div className="flex h-[46px] items-center bg-[#a83240] pr-[14px] pl-[13px] text-[#3b0a12]">
            <button aria-label="Back" className="w-9 text-[#1c0508]"><ArrowLeft className="size-4" /></button>
            <button aria-label="Forward" className="w-9 text-[#82202e]"><ArrowRight className="size-4" /></button>
            <button aria-label="Reload" className="w-9 text-[#1c0508]"><RotateCw className="size-[15px]" strokeWidth={2.5} /></button>
            <label className="flex h-[34px] flex-1 items-center rounded-full bg-[#822e36] pr-4 pl-1">
                <span className="flex size-[26px] items-center justify-center rounded-full bg-[#a83240]">
                    <svg viewBox="0 0 14 14" className="size-[14px]" fill="none" stroke="#fff" strokeWidth="1.600"><circle cx="3.500" cy="4" r="2" /><path d="M8 4h5M1 10.500h5" /><circle cx="10.500" cy="10.500" r="2" /></svg>
                </span>
                <input
                    aria-label="Address"
                    defaultValue="qbo.intuit.com/app/bill?srcTxnId=225595&srcTxnTypeId=46&nameId=219"
                    className="ml-[5px] flex-1 bg-[linear-gradient(90deg,#fff_88px,#e0b9be_88px)] bg-clip-text text-[13px] text-transparent outline-none"
                />
                <ZoomOut className="mr-4 size-4 text-[#e3bcc0]" />
                <Star className="size-4 text-[#e3bcc0]" />
            </label>
            <span className="ml-[17px] flex size-4 items-center justify-center rounded-full bg-[#d9e4e0]"><Globe className="size-4 text-[#7d9a96]" strokeWidth={1.5} /></span>
            <Puzzle className="ml-[22px] size-[17px] text-[#1c0508]" />
            <span className="mx-4 h-4 w-px bg-[#82202e]" />
            <CircleUserRound className="size-[18px] text-[#efa9d8]" />
            <EllipsisVertical className="mr-0.5 ml-[18px] size-4 text-[#1c0508]" strokeWidth={3} />
        </div>
        <div className="flex h-[35px] items-center border-b border-[#6b3a42] bg-[#a83240] pb-1 pl-[17px] text-[#1c0508]">
            <LayoutGrid className="size-4" />
            <span className="mr-[14px] ml-4 h-4 w-px bg-[#6d2430]" />
            {bookmarks.map(b => <a key={b.name + b.width} href="#" className={`flex shrink-0 items-center gap-1.5 whitespace-nowrap ${b.width}`}>{b.icon}{b.name}</a>)}
            <span className="ml-auto text-lg leading-4 font-semibold">»</span>
            <span className="mx-[18px] h-4 w-px bg-[#6d2430]" />
            <a href="#" className="flex items-center gap-2 pr-[15px]"><Folder className="size-[15px] text-[#8a3540]" />All Bookmarks</a>
        </div>
        <main className="flex flex-1 flex-col items-center pt-3">
            <div role="status" className="flex h-[41px] w-[333px] items-center rounded-sm border border-[#bdbdbd] px-3 text-[10px] text-[#2e83c2] shadow-sm">
                <span className="flex size-3 items-center justify-center rounded-full bg-[#4caf50]"><Check className="size-2 text-white" strokeWidth={4} /></span>
                <span className="ml-2 flex-1">Purchase Order US-Q3-25-00695-P saved</span>
                <button className="font-semibold">Close</button>
            </div>
            <span className="mt-[312px] size-2 rounded-full bg-[#12a812]" />
        </main>
        <footer className="flex h-10 items-center bg-[linear-gradient(90deg,#e6dcc6,#e4dfbb_40%,#dad8cc_55%,#d8d7cf_70%,#e6dfb8_88%,#e6dcc0)]">
            <button aria-label="Start" className="flex w-12 justify-center"><WindowsLogo /></button>
            <label className="mr-0.5 flex h-10 w-[344px] items-center gap-3 border border-[#b9b9b9] bg-white pl-3">
                <Search className="size-[17px] -scale-x-100" strokeWidth={1.5} />
                <input aria-label="Search" placeholder="Type here to search" className="flex-1 text-sm outline-none placeholder:text-[#333]" />
            </label>
            <AppButtons />
            <div className="ml-auto flex items-center text-[13px] text-[#111]">
                <span className="relative">
                    <Cloud className="size-6 fill-[#c8dcf5] text-[#a9c4e8]" />
                    <span className="absolute -top-1 -right-1 flex size-3 items-center justify-center rounded-full bg-[#c81e1e] text-[8px] text-white">1</span>
                </span>
                <span className="ml-2">25°C</span>
                <span className="ml-2.5">Cloudy</span>
                <ChevronUp className="ml-4 size-[14px]" />
                <Cloud className="ml-2.5 size-4 fill-[#0f7ad8] text-[#0f7ad8]" />
                <svg viewBox="0 0 16 16" className="ml-2 size-4" fill="none" stroke="#222"><path d="M1 2l9-1.500V14L1 15zM10 1h5v9M4 6c2-2 4 0 4 1M7 10c-2 1-3 0-3-1" /><circle cx="12" cy="12.500" r="3.300" fill="#e81123" stroke="none" /></svg>
                <svg viewBox="0 0 16 16" className="ml-2 size-4" fill="none" stroke="#222"><path d="M4.500 3.500h11v8h-11V8M.5 1.500h4v5h-4zM2.500 6.500v8M10 11.500v3M6 14.500h8" /></svg>
                <VolumeX className="ml-2 size-4" strokeWidth={1.5} />
                <span className="ml-3"><PenSwirl /></span>
                <Clock className="ml-3 w-[58px]" />
                <span className="relative ml-[14px]">
                    <MessageSquareText className="size-[18px] fill-black text-black" />
                    <svg viewBox="0 0 18 18" className="absolute top-0 left-0 size-[18px]" stroke="#e6dfb8"><path d="M4 5.500h10M4 8.500h10M4 11.500h6" /></svg>
                </span>
                <span className="ml-[21px] h-10 w-px bg-[#b5b098]" />
                <span className="w-[3px]" />
            </div>
        </footer>
    </div>
);

export default function App() {
    return (
        <div className="grid min-h-screen grid-cols-[1366fr_1440fr] bg-black font-['Open_Sans','Noto_Sans',sans-serif]">
            <ExcelDesktop />
            <BrowserDesktop />
        </div>
    );
}
